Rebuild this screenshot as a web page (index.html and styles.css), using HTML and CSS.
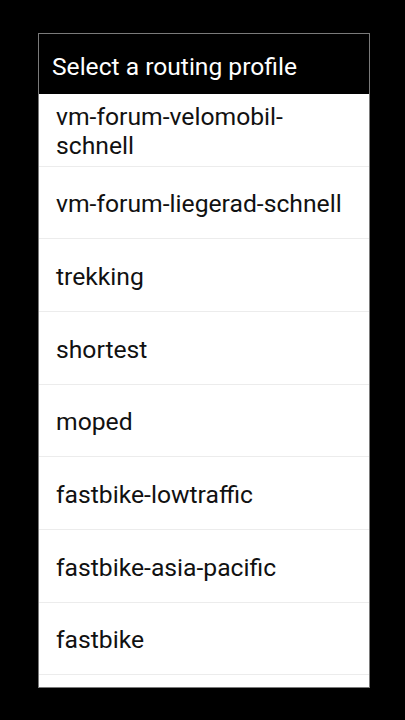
FILE: index.html
```html
<!DOCTYPE html>
<html lang="en">
<head>
<meta charset="utf-8">
<title>Select a routing profile</title>
<link rel="stylesheet" href="styles.css">
</head>
<body>
<div class="dialog">
  <div class="title">Select a routing profile</div>
  <ul class="list">
    <li class="item">vm-forum-velomobil-<br>schnell</li>
    <li class="item">vm-forum-liegerad-schnell</li>
    <li class="item">trekking</li>
    <li class="item">shortest</li>
    <li class="item">moped</li>
    <li class="item">fastbike-lowtraffic</li>
    <li class="item">fastbike-asia-pacific</li>
    <li class="item">fastbike</li>
  </ul>
</div>
</body>
</html>
```

FILE: styles.css
```css
html, body {
  margin: 0;
  padding: 0;
  background: #000;
  height: 720px;
  overflow: hidden;
}
body {
  font-family: Roboto, "Liberation Sans", sans-serif;
  padding-top: 33px;
  padding-left: 38px;
}
.dialog {
  width: 330px;
  height: 653px;
  border: 1px solid #7a7a7a;
  background: #fff;
  display: flex;
  flex-direction: column;
  overflow: hidden;
}
.title {
  background: #000;
  color: #fff;
  height: 60px;
  flex: none;
  display: flex;
  align-items: center;
  padding-left: 13px;
  font-size: 24.6px;
  padding-top: 4px;
  box-sizing: border-box;
}
.list {
  list-style: none;
  margin: 0;
  padding: 0;
}
.item {
  min-height: 72.67px;
  box-sizing: border-box;
  border-bottom: 1px solid #ececec;
  display: flex;
  align-items: center;
  padding-left: 17px;
  padding-top: 3px;
  font-size: 24.7px;
  line-height: 29px;
  color: #111;
}
```
